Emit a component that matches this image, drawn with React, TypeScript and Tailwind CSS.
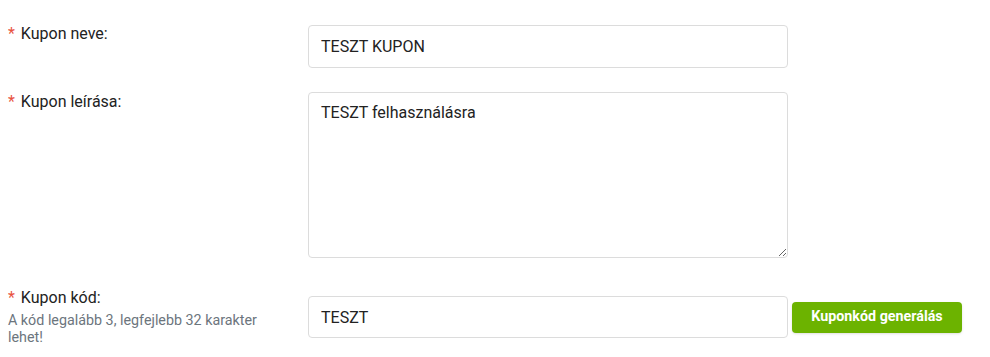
export default function App() {
  return (
    <div
      className="w-[990px] h-[357px] bg-white overflow-hidden text-[#222]"
      style={{ fontFamily: "Roboto, 'Liberation Sans', sans-serif" }}
    >
      <div className="pl-2 pt-[22px]">
        <div className="flex items-start">
          <label className="w-[300px] text-base leading-6">
            <span className="text-[#e8533f] mr-[2px]">*</span> Kupon neve:
          </label>
          <input
            defaultValue="TESZT KUPON"
            className="mt-[3px] w-[480px] h-[43px] border border-[#dcdcdc] rounded px-3 text-base text-[#222] outline-none"
          />
        </div>

        <div className="flex items-start mt-[22px]">
          <label className="w-[300px] text-base leading-6">
            <span className="text-[#e8533f] mr-[2px]">*</span> Kupon leírása:
          </label>
          <textarea
            defaultValue="TESZT felhasználásra"
            className="mt-[2px] w-[480px] h-[166px] border border-[#dcdcdc] rounded px-3 pt-2 text-base leading-6 text-[#222] outline-none"
          />
        </div>

        <div className="flex items-start mt-[28px]">
          <div className="w-[300px] pr-[20px]">
            <label className="block text-base leading-6">
              <span className="text-[#e8533f] mr-[2px]">*</span> Kupon kód:
            </label>
            <p className="mt-[2px] text-[14.3px] leading-[17px] text-[#6c757d]">
              A kód legalább 3, legfejlebb 32 karakter lehet!
            </p>
          </div>
          <div className="mt-[10px] flex items-center gap-1">
            <input
              defaultValue="TESZT"
              className="w-[480px] h-[42px] border border-[#dcdcdc] rounded px-3 text-base text-[#222] outline-none"
            />
            <button className="w-[170px] h-[31px] rounded bg-[#6cb300] text-white text-[14.3px] font-bold shadow-sm">
              Kuponkód generálás
            </button>
          </div>
        </div>
      </div>
    </div>
  );
}
